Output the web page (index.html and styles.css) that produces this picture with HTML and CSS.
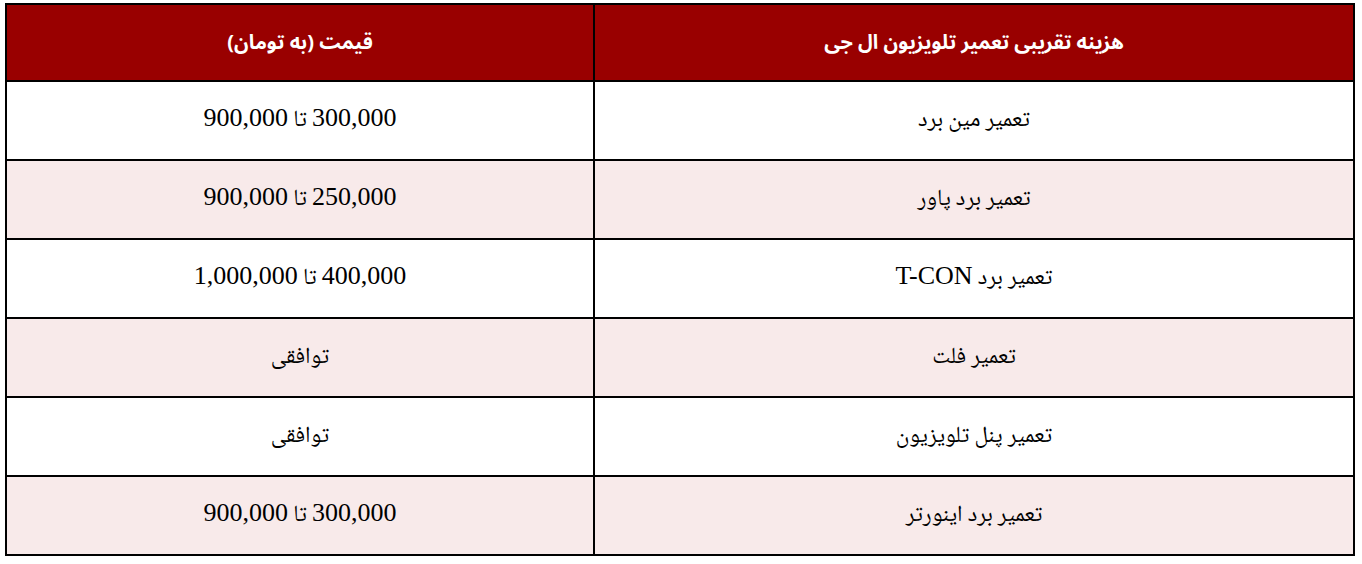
FILE: index.html
```html
<!DOCTYPE html>
<html lang="fa" dir="rtl">
<head>
<meta charset="utf-8">
<title>هزینه تعمیر تلویزیون ال جی</title>
<link rel="stylesheet" href="styles.css">
</head>
<body>
<table class="price-table">
  <thead>
    <tr class="head-row">
      <th class="col-service">هزینه تقریبی تعمیر تلویزیون ال جی</th>
      <th class="col-price">قیمت (به تومان)</th>
    </tr>
  </thead>
  <tbody>
    <tr class="row">
      <td>تعمیر مین برد</td>
      <td><span class="num">300,000</span> تا <span class="num">900,000</span></td>
    </tr>
    <tr class="row alt">
      <td>تعمیر برد پاور</td>
      <td><span class="num">250,000</span> تا <span class="num">900,000</span></td>
    </tr>
    <tr class="row">
      <td>تعمیر برد <span class="num">T-CON</span></td>
      <td><span class="num">400,000</span> تا <span class="num">1,000,000</span></td>
    </tr>
    <tr class="row alt">
      <td>تعمیر فلت</td>
      <td>توافقی</td>
    </tr>
    <tr class="row">
      <td>تعمیر پنل تلویزیون</td>
      <td>توافقی</td>
    </tr>
    <tr class="row alt">
      <td>تعمیر برد اینورتر</td>
      <td><span class="num">300,000</span> تا <span class="num">900,000</span></td>
    </tr>
  </tbody>
</table>
</body>
</html>
```
FILE: styles.css
```css
html, body {
  margin: 0;
  padding: 0;
  background: #ffffff;
}
body {
  padding: 3px 7px 0 5px;
}
.price-table {
  direction: rtl;
  border-collapse: collapse;
  width: 1350px;
  font-family: "Noto Naskh Arabic", "Noto Sans Arabic", "DejaVu Sans", serif;
  font-size: 23px;
  color: #000;
}
.price-table th,
.price-table td {
  border: 2px solid #000;
  text-align: center;
  vertical-align: middle;
  padding: 0;
}
.head-row th {
  background: #990000;
  color: #ffffff;
  font-family: "Noto Sans Arabic", "DejaVu Sans", sans-serif;
  font-weight: bold;
  font-size: 20px;
  height: 75px;
}
.col-service {
  width: 758px;
}
.row td {
  height: 77px;
}
.row.alt td {
  background: #f8eaea;
}
.num {
  font-family: "Liberation Serif", serif;
  font-size: 26px;
}
```
